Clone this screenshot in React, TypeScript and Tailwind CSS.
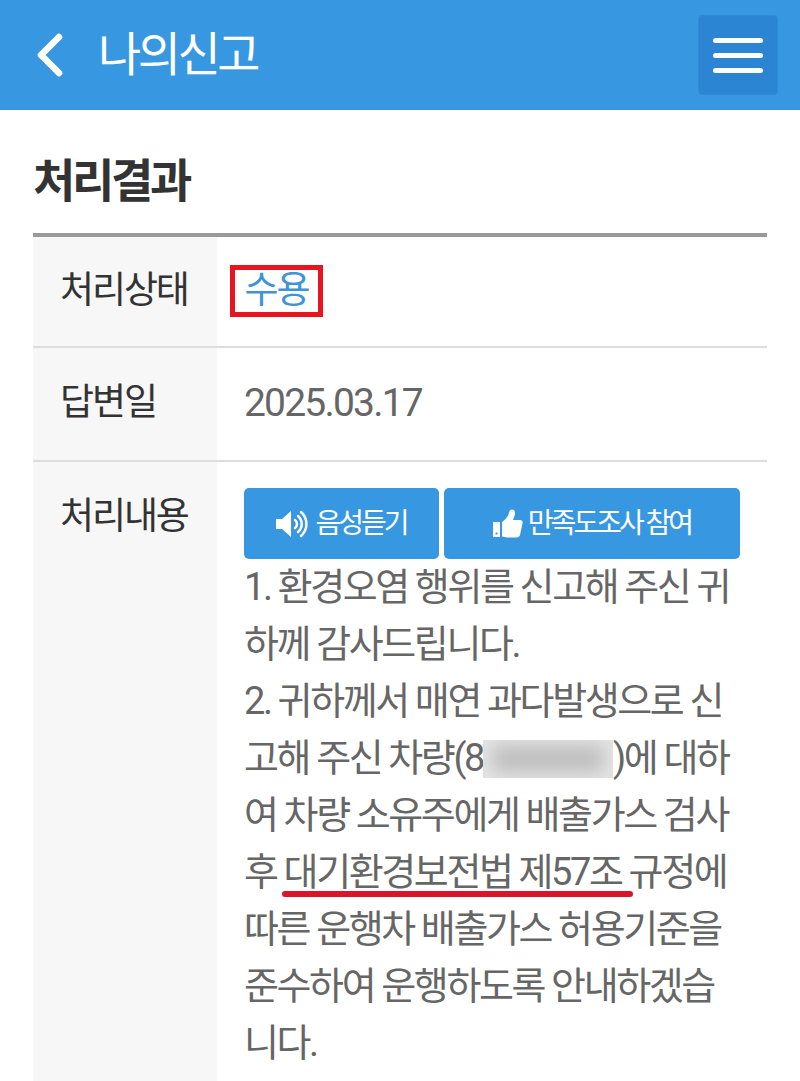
import { ChevronLeft } from "lucide-react";

const FONT = "font-['Roboto','Noto_Sans_CJK_KR',sans-serif]";

function SpeakerIcon() {
  return (
    <svg width="36" height="28" viewBox="0 0 36 28" fill="none">
      <path d="M0 9h6l9-8v26l-9-8H0z" fill="#fff" />
      <path d="M19 10a5 5 0 0 1 0 8" stroke="#fff" strokeWidth="2.500" strokeLinecap="round" />
      <path d="M22 6a10.500 10.500 0 0 1 0 16" stroke="#fff" strokeWidth="2.500" strokeLinecap="round" />
      <path d="M25 2a16 16 0 0 1 0 24" stroke="#fff" strokeWidth="2.500" strokeLinecap="round" />
    </svg>
  );
}

function ThumbIcon() {
  return (
    <svg width="30" height="30" viewBox="0 0 30 30" fill="#fff">
      <path d="M0 13h7v15H0zM2.500 23.500h2v2h-2z" fillRule="evenodd" />
      <path d="M9 13c3-2 6-5 7-9 .5-2 1-3.500 3-3.500 3 0 3.500 3.500 2.500 6.500L20 11h7c2 0 3 1.500 2.500 3.500L27 26c-.5 1.500-1.500 2.500-3.500 2.500H14c-2 0-3-1-5-1z" />
    </svg>
  );
}

export default function App() {
  return (
    <div className={`${FONT} w-[800px] h-[1081px] overflow-hidden bg-white`}>
      <header className="h-[110px] bg-[#3897e1] flex items-center justify-between pl-[14px] pr-[22px]">
        <div className="flex items-center">
          <ChevronLeft size={72} color="#fff" strokeWidth={2.2} />
          <h1 className="ml-[12px] text-[47px] leading-none text-white tracking-[-3.5px] font-normal -mt-[2px]">나의신고</h1>
        </div>
        <button className="w-[80px] h-[80px] rounded-[4px] bg-[#2b85d3] border border-[#2f8ad8] flex flex-col items-center justify-center gap-[10px]">
          <span className="block w-[50px] h-[5px] rounded-full bg-white" />
          <span className="block w-[50px] h-[5px] rounded-full bg-white" />
          <span className="block w-[50px] h-[5px] rounded-full bg-white" />
        </button>
      </header>

      <main className="px-[33px]">
        <h2 className="h-[123px] flex items-center text-[46px] font-bold text-[#333] tracking-[-3.3px] leading-none pt-[18px]">처리결과</h2>

        <div className="border-t-[4px] border-[#999]">
          {/* 처리상태 */}
          <div className="flex h-[111px] border-b-[2px] border-[#ddd]">
            <div className="w-[184px] bg-[#f7f7f7] pl-[27px] pt-[31px] text-[37px] leading-[46px] tracking-[-2.1px] text-[#333]">처리상태</div>
            <div className="pl-[13px] pt-[28px]">
              <span className="inline-block h-[52px] w-[93px] border-[5px] border-[#e8141f] text-center text-[37px] leading-[41px] tracking-[-2.1px] text-[#3e95d6]">수용</span>
            </div>
          </div>

          {/* 답변일 */}
          <div className="flex h-[114px] border-b-[2px] border-[#ddd]">
            <div className="w-[184px] bg-[#f7f7f7] pl-[27px] pt-[32px] text-[37px] leading-[46px] tracking-[-2.1px] text-[#333]">답변일</div>
            <div className="pl-[27px] pt-[32px] text-[39px] leading-[46px] tracking-[-1.8px] text-[#666]">2025.03.17</div>
          </div>

          {/* 처리내용 */}
          <div className="flex">
            <div className="w-[184px] shrink-0 bg-[#f7f7f7] pl-[27px] pt-[32px] text-[37px] leading-[46px] tracking-[-2.1px] text-[#333] h-[620px]">처리내용</div>
            <div className="pl-[27px] pt-[26px]">
              <div className="flex gap-[5px]">
                <button className="w-[195px] h-[71px] rounded-[5px] bg-[#3897e1] text-white flex items-center justify-center gap-[3px] text-[28px] tracking-[-3px]">
                  <SpeakerIcon />
                  <span>음성듣기</span>
                </button>
                <button className="w-[296px] h-[71px] rounded-[5px] bg-[#3897e1] text-white flex items-center justify-center gap-[5px] text-[28px] tracking-[-3px]">
                  <ThumbIcon />
                  <span>만족도조사 참여</span>
                </button>
              </div>
              <div className="whitespace-nowrap text-[38px] leading-[57px] tracking-[-2.4px] text-[#666]">
                <p>1. 환경오염 행위를 신고해 주신 귀</p>
                <p>하께 감사드립니다.</p>
                <p>2. 귀하께서 매연 과다발생으로 신</p>
                <p className="flex items-center">
                  <span>고해 주신 차량(8</span>
                  <span className="inline-block w-[130px] h-[38px] bg-[#e4e4e4] overflow-hidden">
                    <span className="block mx-[10px] mt-[6px] h-[26px] bg-[#bdbdbd] blur-[9px]" />
                  </span>
                  <span>)에 대하</span>
                </p>
                <p>여 차량 소유주에게 배출가스 검사</p>
                <p className="relative">
                  후 대기환경보전법 제57조 규정에
                  <span className="absolute left-[38px] top-[47px] w-[351px] h-[6px] rounded-full bg-[#d9142b]" />
                </p>
                <p>따른 운행차 배출가스 허용기준을</p>
                <p>준수하여 운행하도록 안내하겠습</p>
                <p>니다.</p>
              </div>
            </div>
          </div>
        </div>
      </main>
    </div>
  );
}
